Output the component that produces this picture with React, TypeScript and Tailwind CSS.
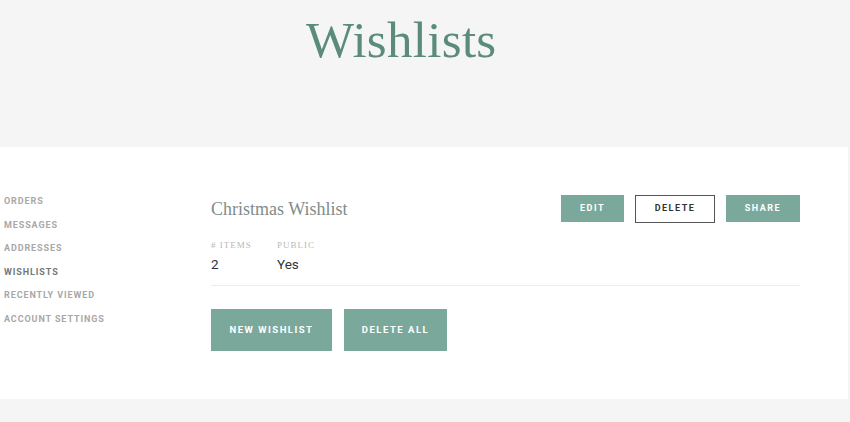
import React from "react";

const navItems = ["Orders", "Messages", "Addresses", "Wishlists", "Recently Viewed", "Account Settings"];

export default function App() {
  return (
    <div className="min-h-[422px] w-[850px] bg-[#f5f5f5] font-['Roboto',sans-serif]">
      {/* Page title */}
      <div className="h-[147px] pl-[306px] pt-[9px]">
        <h1 className="font-['Liberation_Serif',serif] text-[51px] leading-[62px] text-[#5b8b7c] tracking-[0.3px]">
          Wishlists
        </h1>
      </div>

      {/* Account panel */}
      <div className="mr-[2px] flex h-[252px] bg-white">
        <nav className="flex w-[211px] flex-col gap-[9.6px] pl-[4px] pt-[47px]">
          {navItems.map((item) => (
            <a
              key={item}
              href="#"
              className={
                "text-[9px] font-bold uppercase leading-[14px] tracking-[0.9px] " +
                (item === "Wishlists" ? "text-[#6f7a77]" : "text-[#a8a8a8]")
              }
            >
              {item}
            </a>
          ))}
        </nav>

        <div className="w-[589px] pt-[48px]">
          <div className="flex items-center justify-between">
            <h2 className="font-['Liberation_Serif',serif] text-[18px] leading-[24px] text-[#7f8d89]">
              Christmas Wishlist
            </h2>
            <div className="flex gap-[11px]">
              <button className="h-[27px] w-[63px] bg-[#7aa99c] text-[9px] font-bold tracking-[1.5px] text-white">
                EDIT
              </button>
              <button className="h-[28px] w-[80px] border border-[#555] bg-white text-[9px] font-bold tracking-[1.5px] text-[#333]">
                DELETE
              </button>
              <button className="h-[27px] w-[74px] bg-[#7aa99c] text-[9px] font-bold tracking-[1.5px] text-white">
                SHARE
              </button>
            </div>
          </div>

          <div className="mt-[16px] flex gap-[24px] border-b border-[#ececec] pb-[12px]">
            <div className="w-[42px]">
              <div className="font-['Liberation_Serif',serif] text-[9px] uppercase leading-[12px] tracking-[1px] text-[#b8b8b8]">
                # Items
              </div>
              <div className="mt-[4px] text-[13.5px] leading-[18px] text-[#333]">2</div>
            </div>
            <div>
              <div className="font-['Liberation_Serif',serif] text-[9px] uppercase leading-[12px] tracking-[1px] text-[#b8b8b8]">
                Public
              </div>
              <div className="mt-[4px] text-[13.5px] leading-[18px] text-[#333]">Yes</div>
            </div>
          </div>

          <div className="mt-[23px] flex gap-[12px]">
            <button className="h-[42px] w-[121px] bg-[#7aa99c] text-[9.5px] font-bold tracking-[1.5px] text-white">
              NEW WISHLIST
            </button>
            <button className="h-[42px] w-[103px] bg-[#7aa99c] text-[9.5px] font-bold tracking-[1.5px] text-white">
              DELETE ALL
            </button>
          </div>
        </div>
      </div>
    </div>
  );
}
